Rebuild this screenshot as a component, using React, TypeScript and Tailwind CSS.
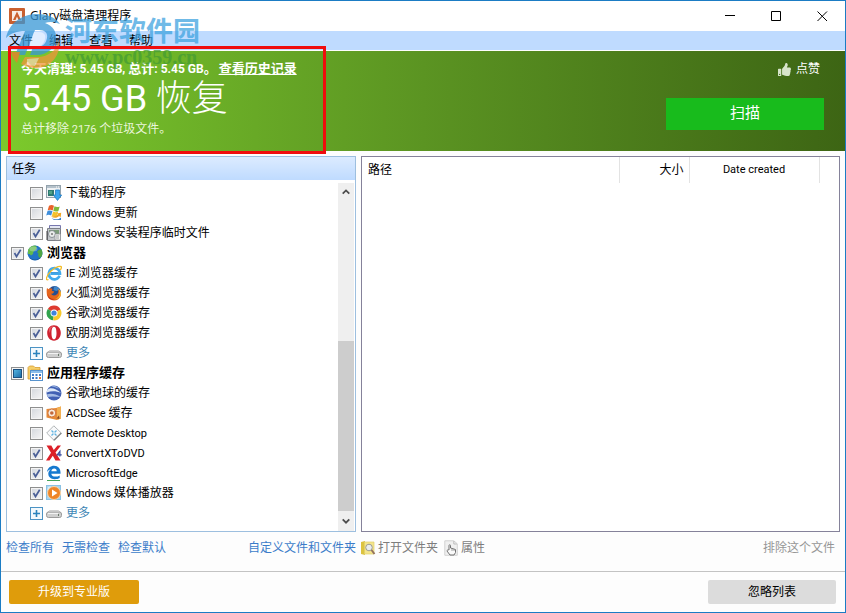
import { useState } from "react";
import type { JSX, ReactNode } from "react";
import { FaThumbsUp } from "react-icons/fa";

type TaskType = {
  label: string;
  icon: () => JSX.Element;
  checked?: boolean;
};

type GroupType = {
  label: string;
  icon: () => JSX.Element;
  state: "checked" | "partial";
  tasks: TaskType[];
};

function Svg({ children }: { children: ReactNode }): JSX.Element {
  return (
    <svg className="size-4 shrink-0" viewBox="0 0 16 16" fill="none" aria-hidden>
      {children}
    </svg>
  );
}

function DownloadsIcon(): JSX.Element {
  return (
    <Svg>
      <rect x="0.5" y="0.5" width="14" height="12" fill="#eef1f3" stroke="#93a2ac" />
      <path d="M1 1h13v2H1z" fill="#b4c1ca" />
      <path d="M10 2h1M12 2h1" stroke="#fff" />
      <path d="M2 5h6v6H2z" fill="#2f7a71" />
      <path d="M3 6h3v3H3z" fill="#4fa287" />
      <path d="M9.500 5h4v5h2.200l-4.200 5.500L7.300 10h2.200z" fill="#3aa5ee" stroke="#1a76c0" strokeWidth="0.7" />
    </Svg>
  );
}

function WindowsUpdateIcon(): JSX.Element {
  return (
    <Svg>
      <path d="M3 .7c2-1 3.500-.8 5 .1L6.700 5.400C5.100 4.600 3.600 4.500 1.700 5.300z" fill="#e8622a" />
      <path d="M8.500 1.200c1.800 1 3.300 1 5.200.2l-1.300 4.500c-1.900.8-3.400.7-5.100-.2z" fill="#7fb93c" />
      <path d="M1.500 5.900c1.900-.8 3.400-.6 5 .2l-1.300 4.500c-1.600-.9-3.100-1-5-.2z" fill="#3f8fdc" />
      <path d="M7.100 6.400c1.700.9 3.200 1 5.100.2L11 10.800c-1.900.8-3.400.7-5.100-.1z" fill="#f5c22c" />
      <path d="M5 11.500c3 2 6.500 1.500 8-.5l1.700 1.300.5-4.500-4.500.8 1.300 1c-1.300 1.500-4 1.900-7 1.900z" fill="#f0a726" />
      <path d="M5.500 13c3 2 7 1.800 9.500-.5V15H8z" fill="#3d82c9" />
    </Svg>
  );
}

function InstallerIcon(): JSX.Element {
  return (
    <Svg>
      <path d="M3.500.5h11v3h-11z" fill="#e3e6f3" stroke="#7777ae" />
      <path d="M1.500 3.500h13v12h-13z" fill="#c2c5c9" stroke="#7b7f87" />
      <path d="M3 5h10v6H3z" fill="#7b9b79" />
      <circle cx="6" cy="9" r="3.500" fill="#e9eceb" stroke="#687178" strokeWidth="0.7" />
      <circle cx="6" cy="9" r="1" fill="#777" />
      <path d="M9 9h5.500v6H9z" fill="#f2f2ef" stroke="#90949a" strokeWidth="0.7" />
      <path d="M10 11h3M10 13h3" stroke="#9ba0a6" />
      <path d="M1 6v9" stroke="#444" />
    </Svg>
  );
}

function GlobeIcon(): JSX.Element {
  return (
    <Svg>
      <circle cx="8" cy="8" r="7.500" fill="#2274c6" />
      <path d="M1 5C2.500 2 5.500.5 8.500.6L10 2.500 8.500 5 6.500 6.500 6 9l-2 1.500L2.500 9 1 9z" fill="#62b94c" />
      <path d="M11.500 5l2.800-1c1.300 2.500 1.500 5 .3 7.500l-2 1.500-1.600-2.500.5-2-1.500-1.500z" fill="#4ea644" />
      <path d="M1.200 11A7.500 7.500 0 0 0 14.800 11 8.500 8.500 0 0 1 1.200 11z" fill="#164b8b" opacity="0.6" />
      <ellipse cx="6.500" cy="4" rx="4" ry="2.500" fill="#fff" opacity="0.28" />
    </Svg>
  );
}

function IeIcon(): JSX.Element {
  return (
    <Svg>
      <path d="M13.600 10.800A5.600 5.600 0 1 1 14 8.700H4.500" stroke="#43abec" strokeWidth="2.600" />
      <path d="M4.500 7.700h8" stroke="#2b8ed8" />
      <path d="M2.500 14.500C-1 16.500.2 10.500 5 6S15.500.2 15.400 2.200c0 .8-.4 1.800-1 2.800" stroke="#f2bb25" strokeWidth="1.300" />
    </Svg>
  );
}

function FirefoxIcon(): JSX.Element {
  return (
    <Svg>
      <circle cx="8.500" cy="7.500" r="6.500" fill="#254f91" />
      <path d="M8 1.500c3-.5 5 1 5.500 3l-3 1.500-3-1z" fill="#3e85c8" />
      <path d="M1 3l1.500 1.200C4 3 5.500 3.200 6.500 4L5.800 5.800l2.500.8L7 8.500l-1.800.3C6 11 9 11 11 9.300c1.500-1.300 1.700-3.300 1-5.300 2.500 1.500 3.500 4.500 2.500 7.200C13.400 14 10.800 15.600 8 15.500 4 15.400 1 12.500.8 8.800.7 6.500.5 5 1 3z" fill="#e5651c" />
      <path d="M12 4c3 3.500 1.500 8.500-3 9.800 3.500.5 6-2 6-5.300 0-2-1-3.700-3-4.500z" fill="#f7b32b" />
      <path d="M1.500 9c1 3.500 3.500 5.300 7 5-3 2-6.700-.5-7-5z" fill="#bd2b20" />
    </Svg>
  );
}

function ChromeIcon(): JSX.Element {
  return (
    <Svg>
      <path d="M8 8L1.800 3.900A7.300 7.300 0 0 1 14.500 4.500z" fill="#de3b30" />
      <path d="M8 8L1.800 3.900A7.300 7.300 0 0 0 7.200 15.300z" fill="#30a34d" />
      <path d="M8 8l6.500-3.500A7.300 7.300 0 0 1 7.200 15.300z" fill="#f7c92c" />
      <circle cx="8" cy="8" r="3.500" fill="#fff" />
      <circle cx="8" cy="8" r="2.600" fill="#3f83dc" />
    </Svg>
  );
}

function OperaIcon(): JSX.Element {
  return (
    <Svg>
      <path
        fillRule="evenodd"
        d="M8 .3c4 0 6.800 3.300 6.800 7.700S12 15.700 8 15.700 1.200 12.400 1.200 8 4 .3 8 .3zM8 1.700C6.200 1.700 5.500 4.500 5.500 8s.7 6.300 2.500 6.300 2.500-2.800 2.500-6.300S9.800 1.700 8 1.700z"
        fill="#cf2330"
      />
      <path d="M3 3.500C4 1.800 6 .8 8 .9 5 2 4 5 4 8c-1-1.500-1.500-3-1-4.500z" fill="#ee7077" opacity="0.7" />
    </Svg>
  );
}

function DriveIcon(): JSX.Element {
  return (
    <Svg>
      <path d="M1.500 7.500l2-2h9l2 2z" fill="#efefef" stroke="#c4c4c4" strokeWidth="0.8" />
      <rect x="0.500" y="7" width="15" height="5.500" rx="2" fill="#cfcfcf" stroke="#9b9b9b" />
      <path d="M2 8.500h10" stroke="#f3f3f3" />
      <path d="M12.500 9v2" stroke="#6b7a6b" />
    </Svg>
  );
}

function AppCacheIcon(): JSX.Element {
  return (
    <Svg>
      <path d="M1 2.500L2.500 1h4L8 2.500h5V5H4v9H1z" fill="#f5cf6a" stroke="#d79d32" strokeWidth="0.800" />
      <rect x="3.500" y="5.500" width="12" height="10" fill="#fff" stroke="#5793cd" />
      <path d="M4 6h11v2H4z" fill="#8cbdea" />
      <path d="M5 10h2M8.500 10h2M12 10h2M5 13h2M8.500 13h2" stroke="#3c78c4" strokeWidth="2" />
      <path d="M12 13h2" stroke="#de7a42" strokeWidth="2" />
    </Svg>
  );
}

function EarthIcon(): JSX.Element {
  return (
    <Svg>
      <circle cx="8" cy="8" r="7.500" fill="#4161b4" />
      <path d="M1.200 5C4 2 9.500 3 15.200 8 10.500 6.200 6 5.500.8 7.500z" fill="#dde9f8" />
      <path d="M.8 9.500C5 8 10 9.300 14.500 12 10 11.500 5 11 1.800 12z" fill="#a5bce4" />
      <path d="M5 1.200c3-1 6 0 8 2.500-3-1.400-5-1.700-8-2.500z" fill="#8eabdc" />
    </Svg>
  );
}

function AcdSeeIcon(): JSX.Element {
  return (
    <Svg>
      <path d="M.5 4l9.500-1 5-1.500v12L11 15 .5 12.500z" fill="#e68a36" />
      <path d="M11 3l4-1.500v12L11 15z" fill="#f2b052" />
      <circle cx="5.800" cy="8" r="4" fill="#f8ebdd" stroke="#d0743a" />
      <circle cx="5.800" cy="8" r="1.800" fill="#c3683b" />
      <path d="M10.500 13.500l2.500-3 .5 3.500z" fill="#8d4822" />
    </Svg>
  );
}

function RemoteDesktopIcon(): JSX.Element {
  return (
    <Svg>
      <path d="M7.800.8L15.300 8 8 15.300.7 8z" fill="#f8f9fa" stroke="#b0b5b7" />
      <path d="M8 15.300L15.300 8" stroke="#83898b" strokeWidth="1.400" />
      <path d="M5.500 5.500L10.500 10.500M10.500 5.500L5.500 10.500" stroke="#5fb4e2" strokeWidth="1.300" />
      <circle cx="8" cy="8" r="0.900" fill="#f8f9fa" />
    </Svg>
  );
}

function ConvertXIcon(): JSX.Element {
  return (
    <Svg>
      <path d="M.5.500h4.800l2.500 4.500L11.500.5H15L9.500 7.500l5 8h-5L6.800 10.800 3.500 15.500H0l5-7.700z" fill="#dc2028" />
      <path d="M13.900 11.500V6.300l-2.700 3.600h4.500" stroke="#3b4fa0" strokeWidth="1.200" />
    </Svg>
  );
}

function EdgeIcon(): JSX.Element {
  return (
    <Svg>
      <path
        d="M1 7C1.600 3 4.500.8 8 .8c4.300 0 6.500 3 6.500 6.600v1.300H5.300c.2 2 1.900 2.900 4.100 2.900 1.600 0 3-.4 4.300-1.200V13c-1.300.8-3 1.200-5 1.200-4 0-6.400-2.300-6.400-5.400 0-2.300 1.200-4 3.200-4.900C3.700 4.300 2 5.300 1 7zm4.400-.8h5.300c0-1.600-.9-2.600-2.500-2.600S5.600 4.700 5.400 6.200z"
        fill="#1779cf"
      />
      <path d="M1 15.500h13" stroke="#45a45a" />
    </Svg>
  );
}

function MediaPlayerIcon(): JSX.Element {
  return (
    <Svg>
      <rect x="0.500" y="0.500" width="14" height="14" fill="#a9d5ef" stroke="#8cc2e3" />
      <circle cx="8" cy="8" r="6.500" fill="#ee8527" stroke="#fbd5a8" />
      <path d="M6 4.500L11.500 8 6 11.500z" fill="#fff" />
      <path d="M2 2l3-1-4 5z" fill="#fff" opacity="0.6" />
    </Svg>
  );
}

function OpenFolderIcon(): JSX.Element {
  return (
    <Svg>
      <path d="M0 2l4-1v14l-4-1z" fill="#dcc340" />
      <path d="M3.500 2H13v12H3.500z" fill="#f4e58c" stroke="#e0d06a" strokeWidth="0.700" />
      <circle cx="8" cy="7.500" r="3.300" fill="#e9edee" stroke="#9c9b92" />
      <path d="M10.500 10l3 4" stroke="#92715f" strokeWidth="1.800" />
    </Svg>
  );
}

function PropertiesIcon(): JSX.Element {
  return (
    <Svg>
      <path d="M.8.8h9l3.500 3v11.500H.8z" fill="#f0f0f0" stroke="#d2d2d2" />
      <path d="M9.800 1v3h3" stroke="#bcbcbc" />
      <path d="M5 10V5.500c0-1 1.500-1 1.500 0V8l5 1.500v3L10 15H6l-3-4c0-1 1-1.500 2-1z" fill="#fafafa" stroke="#727272" />
      <path d="M8 8.500V11M10 9v2" stroke="#888" strokeWidth="0.800" />
    </Svg>
  );
}

function AppLogo(): JSX.Element {
  return (
    <Svg>
      <rect width="16" height="16" rx="1" fill="#c9602f" />
      <path d="M3 3h10v10H3z" fill="#f7ede7" />
      <path d="M8 3.500L12 12H9.500L8 8.500 6.500 12H4z" fill="#c9602f" />
    </Svg>
  );
}

const looseTasks: TaskType[] = [
  { label: "下载的程序", icon: DownloadsIcon },
  { label: "Windows 更新", icon: WindowsUpdateIcon },
  { label: "Windows 安装程序临时文件", icon: InstallerIcon, checked: true },
];

const groups: GroupType[] = [
  {
    label: "浏览器",
    icon: GlobeIcon,
    state: "checked",
    tasks: [
      { label: "IE 浏览器缓存", icon: IeIcon, checked: true },
      { label: "火狐浏览器缓存", icon: FirefoxIcon, checked: true },
      { label: "谷歌浏览器缓存", icon: ChromeIcon, checked: true },
      { label: "欧朋浏览器缓存", icon: OperaIcon, checked: true },
    ],
  },
  {
    label: "应用程序缓存",
    icon: AppCacheIcon,
    state: "partial",
    tasks: [
      { label: "谷歌地球的缓存", icon: EarthIcon },
      { label: "ACDSee 缓存", icon: AcdSeeIcon },
      { label: "Remote Desktop", icon: RemoteDesktopIcon },
      { label: "ConvertXToDVD", icon: ConvertXIcon, checked: true },
      { label: "MicrosoftEdge", icon: EdgeIcon, checked: true },
      { label: "Windows 媒体播放器", icon: MediaPlayerIcon, checked: true },
    ],
  },
];

const menus = ["文件", "编辑", "查看", "帮助"];

// Latin runs are set one size smaller than the Chinese around them.
function Mixed({ text }: { text: string }): JSX.Element {
  return (
    <span className="whitespace-pre">
      {text.split(/([ -~]+)/).map((part, i) =>
        i % 2 ? (
          <span key={i} className="text-[11px]">
            {part}
          </span>
        ) : (
          part
        ),
      )}
    </span>
  );
}

type CheckBoxProps = {
  defaultChecked?: boolean;
  partial?: boolean;
};

function CheckBox({ defaultChecked, partial }: CheckBoxProps): JSX.Element {
  const [checked, setChecked] = useState(Boolean(defaultChecked));
  const [mixed, setMixed] = useState(Boolean(partial));

  return (
    <span className="grid shrink-0 place-items-center">
      <input
        type="checkbox"
        className="col-start-1 row-start-1 size-[13px] appearance-none border border-[#8e8f8f] bg-linear-to-br from-[#d3d7dd] to-[#f6f6f6] shadow-[inset_0_0_0_1px_#f4f4f4]"
        checked={checked}
        aria-checked={mixed ? "mixed" : checked}
        onChange={(e) => {
          setMixed(false);
          setChecked(e.target.checked);
        }}
      />
      {mixed && (
        <span className="pointer-events-none col-start-1 row-start-1 size-[9px] border border-[#1c5180] bg-linear-to-br from-[#54b4e0] to-[#1d6ea8]" />
      )}
      {checked && !mixed && (
        <svg className="pointer-events-none col-start-1 row-start-1 size-[13px]" viewBox="0 0 13 13" aria-hidden>
          <path d="M3.500 6l2 3.500L9.700 2.800" fill="none" stroke="#4a5f97" strokeWidth="1.700" />
        </svg>
      )}
    </span>
  );
}

function TaskRow({ task }: { task: TaskType }): JSX.Element {
  const TaskIcon = task.icon;
  return (
    <li className="flex h-5 items-center pl-[23px]">
      <label className="flex items-center">
        <CheckBox defaultChecked={task.checked} />
        <span className="ml-[3px] mr-1">
          <TaskIcon />
        </span>
        <Mixed text={task.label} />
      </label>
    </li>
  );
}

function MoreRow(): JSX.Element {
  return (
    <li className="flex h-5 items-center pl-[23px]">
      <button
        type="button"
        aria-label="展开"
        className="grid size-[13px] place-items-center border border-[#4c93c4] bg-[#f3f9fd]"
      >
        <svg className="size-[9px]" viewBox="0 0 9 9" aria-hidden>
          <path d="M4.500 1v7M1 4.500h7" stroke="#2b83bd" strokeWidth="1.600" />
        </svg>
      </button>
      <span className="ml-[3px] mr-1">
        <DriveIcon />
      </span>
      <a href="#more" className="text-[#3d86b5]">
        更多
      </a>
    </li>
  );
}

function Group({ group }: { group: GroupType }): JSX.Element {
  const GroupIcon = group.icon;
  return (
    <li>
      <label className="flex h-5 w-fit items-center pl-1 text-[13px] font-bold">
        <CheckBox defaultChecked={group.state === "checked"} partial={group.state === "partial"} />
        <span className="ml-[3px] mr-1">
          <GroupIcon />
        </span>
        {group.label}
      </label>
      <ul>
        {group.tasks.map((task) => (
          <TaskRow key={task.label} task={task} />
        ))}
        <MoreRow />
      </ul>
    </li>
  );
}

function ScrollBar(): JSX.Element {
  return (
    <div className="mr-px flex w-4 flex-col bg-[#efefef]">
      <button type="button" aria-label="向上" className="grid h-[18px] place-items-center">
        <svg className="size-2" viewBox="0 0 8 8" aria-hidden>
          <path d="M.7 5.700L4 2.400l3.300 3.300" fill="none" stroke="#4d4d4d" strokeWidth="1.800" />
        </svg>
      </button>
      <div className="grow-[14]" />
      <div className="grow-[17] bg-[#cdcdcd]" />
      <button type="button" aria-label="向下" className="grid h-5 place-items-center">
        <svg className="size-2" viewBox="0 0 8 8" aria-hidden>
          <path d="M.7 2.400L4 5.700l3.300-3.300" fill="none" stroke="#4d4d4d" strokeWidth="1.800" />
        </svg>
      </button>
    </div>
  );
}

function TitleBar(): JSX.Element {
  return (
    <header className="flex h-[30px] items-center bg-white pl-2">
      <AppLogo />
      <h1 className="ml-[5px] font-['Open_Sans','Noto_Sans_CJK_SC',sans-serif] text-xs">
        Glary磁盘清理程序
      </h1>
      <div className="ml-auto flex self-stretch">
        <button type="button" aria-label="最小化" className="grid w-[46px] place-items-center">
          <svg className="size-[11px]" viewBox="0 0 11 11" aria-hidden>
            <path d="M0 4.500h10" stroke="#000" />
          </svg>
        </button>
        <button type="button" aria-label="最大化" className="grid w-[46px] place-items-center">
          <svg className="size-[11px]" viewBox="0 0 11 11" aria-hidden>
            <path d="M.5.500h9v9h-9z" fill="none" stroke="#000" />
          </svg>
        </button>
        <button type="button" aria-label="关闭" className="grid w-[46px] place-items-center">
          <svg className="size-[11px]" viewBox="0 0 11 11" aria-hidden>
            <path d="M.5.500l9.500 9.500M10 .500L.5 10" stroke="#000" />
          </svg>
        </button>
      </div>
    </header>
  );
}

function Banner(): JSX.Element {
  return (
    <section className="flex h-[100px] justify-between bg-linear-to-r from-[#7cca2c] via-[#5b9422] to-[#3d6514] pr-[21px] pl-5 text-white">
      <div className="flex flex-col pt-[9px]">
        <p className="flex text-[13px] leading-[18px] font-bold whitespace-pre">
          今天清理<span className="text-xs leading-[18px]">: 5.45 GB, </span>总计
          <span className="text-xs leading-[18px]">: 5.45 GB</span>。
          <a href="#history" className="ml-0.5 underline">
            查看历史记录
          </a>
        </p>
        <p className="text-4xl leading-[42px] font-light">
          <span className="font-normal">5.45 GB</span> 恢复
        </p>
        <p className="text-xs leading-[18px] text-[#eaf6dc]">
          <Mixed text="总计移除 2176 个垃圾文件。" />
        </p>
      </div>
      <div className="flex flex-col items-end pt-[9px]">
        <button type="button" className="mr-1 flex h-[18px] items-center gap-[5px] text-xs">
          <FaThumbsUp className="size-[13px] text-[#d7e4cb]" />
          点赞
        </button>
        <button type="button" className="mt-5 h-8 w-[158px] bg-[#18bb1c] text-[15px]">
          扫描
        </button>
      </div>
    </section>
  );
}

function TaskPanel(): JSX.Element {
  return (
    <section className="flex w-[350px] shrink-0 flex-col border border-[#9dbfdf] bg-white">
      <h2 className="flex h-[23px] items-center bg-linear-to-b from-[#dcebff] to-[#bfdbff] pl-[5px]">
        任务
      </h2>
      <div className="flex flex-1 pt-[3px]">
        <ul className="flex-1">
          {looseTasks.map((task) => (
            <TaskRow key={task.label} task={task} />
          ))}
          {groups.map((group) => (
            <Group key={group.label} group={group} />
          ))}
        </ul>
        <ScrollBar />
      </div>
    </section>
  );
}

function FilePanel(): JSX.Element {
  return (
    <section className="min-w-0 flex-1 border border-[#85829a] bg-white">
      <table className="w-full table-fixed border-collapse">
        <thead>
          <tr className="h-[26px] *:border-r *:border-[#e3e3e3] *:p-0 *:font-normal">
            <th className="pl-1.5! text-left">路径</th>
            <th className="w-[70px] pr-[5px]! text-right">大小</th>
            <th className="w-[130px] text-center text-[11px]">Date created</th>
            <th className="w-5 border-r-0!" aria-label="其他" />
          </tr>
        </thead>
        <tbody />
      </table>
    </section>
  );
}

function SiteMark(): JSX.Element {
  return (
    <div className="pointer-events-none absolute top-3 left-1 flex opacity-75">
      <svg className="h-14 w-[60px]" viewBox="0 0 60 56" aria-hidden>
        <path d="M1 25C4 10 17 1 32 1c10 0 18 3 23 10-5-2-10-3-15-1 8 3 12 9 11 16-1 9-9 16-19 16h-7l3-8h4c5 0 9-3 10-9 1-5-2-8-8-8h-4L20 42H10l10-24C12 18 6 20 1 25z" fill="#3797d6" />
        <path d="M29 19h5c5 0 7 3 6 7-1 5-5 8-9 8h-7z" fill="#fff" opacity="0.700" />
        <path d="M6 39h9l-3 11c-3-3-5-7-6-11z" fill="#ee7d2b" />
        <path d="M20 44h12c11 0 19-6 22-16 2 14-8 27-23 27-6 0-11-2-15-4z" fill="#f0963a" />
        <path d="M22 46l12-1-4 8-8-1z" fill="#fff" opacity="0.600" />
      </svg>
      <div className="flex flex-col">
        <span className="mt-1 text-[27px] leading-[30px] font-bold text-[#3fa3df]">河东软件园</span>
        <span className="font-['Liberation_Serif',serif] text-xl leading-5 font-bold text-[#449c33]">
          www.pc0359.cn
        </span>
      </div>
    </div>
  );
}

function App(): JSX.Element {
  return (
    <div className="relative flex min-h-screen flex-col border border-[#1b7cc4] bg-[#fdfdfd] font-[Roboto,'Noto_Sans_CJK_SC',sans-serif] text-xs text-black">
      <TitleBar />
      <nav className="mb-px flex h-[19px] bg-[#bfdbff]">
        {menus.map((menu) => (
          <button key={menu} type="button" className="px-2">
            {menu}
          </button>
        ))}
      </nav>
      <Banner />
      <main className="flex flex-1 gap-[5px] px-[5px] pt-[5px]">
        <TaskPanel />
        <FilePanel />
      </main>
      <div className="flex h-[39px] gap-[5px] px-[5px] pb-2 text-[#3b7cc9]">
        <div className="flex w-[350px] shrink-0 items-center gap-2">
          <a href="#all">检查所有</a>
          <a href="#none">无需检查</a>
          <a href="#default">检查默认</a>
          <a href="#custom" className="ml-auto">
            自定义文件和文件夹
          </a>
        </div>
        <div className="flex flex-1 items-center gap-1.5 pr-[5px] text-[#7d7d7d]">
          <button type="button" className="flex items-center gap-px">
            <OpenFolderIcon />
            打开文件夹
          </button>
          <button type="button" className="flex items-center gap-px">
            <PropertiesIcon />
            属性
          </button>
          <button type="button" className="ml-auto text-[#969696]">
            排除这个文件
          </button>
        </div>
      </div>
      <footer className="flex h-[41px] items-start justify-between border-t border-[#c3c3c3] pt-2 pr-[9px] pl-2">
        <button type="button" className="h-6 w-[130px] rounded-xs bg-[#df9c0b] text-white">
          升级到专业版
        </button>
        <button type="button" className="h-6 w-32 rounded-xs bg-[#dcdcdc]">
          忽略列表
        </button>
      </footer>
      <SiteMark />
      <div className="pointer-events-none absolute top-[45px] left-[7px] h-[108px] w-[318px] border-3 border-[#f00d0d]" />
    </div>
  );
}

export default App;
